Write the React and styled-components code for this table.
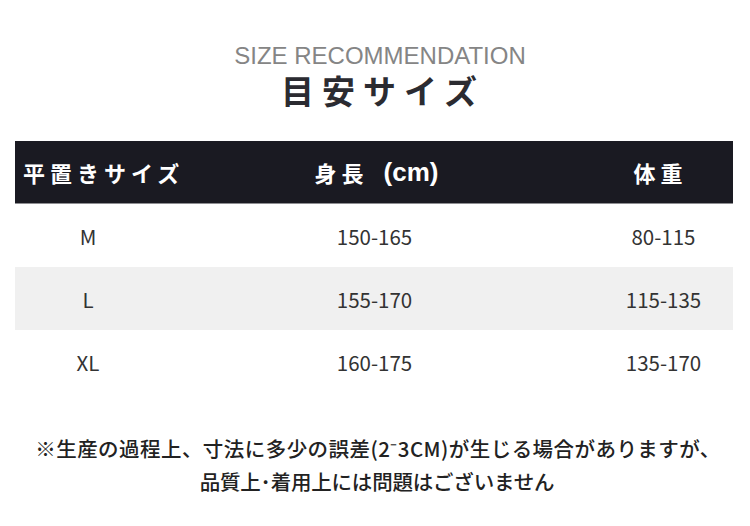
import React from "react";
import styled, { createGlobalStyle } from "styled-components";

const Global = createGlobalStyle`
  html, body { margin: 0; padding: 0; background: #ffffff; }
  body { width: 750px; font-family: "Noto Sans CJK JP", "Noto Sans", sans-serif; }
`;

const Page = styled.div`
  display: flex;
  flex-direction: column;
  align-items: stretch;
  padding-top: 44px;
  width: 750px;
  height: 526px;
  box-sizing: border-box;
  overflow: hidden;
`;

const EnTitle = styled.div`
  font-family: "Liberation Sans", Arial, sans-serif;
  font-size: 24px;
  line-height: 24px;
  color: #858585;
  text-align: center;
  padding-left: 10px;
`;

const JaTitle = styled.div`
  margin-top: 8px;
  font-family: "Noto Sans CJK JP", sans-serif;
  font-weight: 700;
  font-size: 33px;
  line-height: 29px;
  letter-spacing: 8px;
  color: #2b2b31;
  text-align: center;
  padding-left: 16px;
`;

const Table = styled.div`
  margin: 36px 17px 0 15px;
  display: flex;
  flex-direction: column;
`;

const Row = styled.div`
  display: grid;
  grid-template-columns: 146px 427px 1fr;
  align-items: center;
  height: ${(p) => (p.$head ? "62px" : "63px")};
  background: ${(p) => (p.$head ? "#1a1a22" : p.$shade ? "#f0f0f0" : "#ffffff")};
  border-bottom: ${(p) => (p.$head ? "1px solid #8e8e92" : "none")};
`;

const HeadCell = styled.div`
  display: flex;
  align-items: center;
  justify-content: ${(p) => (p.$left ? "flex-start" : "center")};
  font-family: "Noto Sans CJK JP", sans-serif;
  font-weight: 700;
  font-size: 22px;
  letter-spacing: 5px;
  color: #ffffff;
  white-space: nowrap;
  padding-left: ${(p) => (p.$pl ? `${p.$pl}px` : "0")};
`;

const Unit = styled.span`
  font-family: "Liberation Sans", Arial, sans-serif;
  font-weight: 700;
  font-size: 26px;
  letter-spacing: 0;
  margin-left: 15px;
`;

const Cell = styled.div`
  font-family: "Noto Sans CJK JP", sans-serif;
  font-weight: 400;
  font-size: 20.5px;
  color: #333333;
  text-align: center;
  white-space: nowrap;
  padding-left: ${(p) => (p.$pl ? `${p.$pl}px` : "0")};
`;

const Note = styled.div`
  margin-top: 39px;
  display: flex;
  flex-direction: column;
  align-items: center;
`;

const NoteLine = styled.div`
  font-family: "Noto Sans CJK JP", sans-serif;
  font-weight: 500;
  font-size: 20.5px;
  line-height: 33px;
  letter-spacing: ${(p) => p.$ls}px;
  color: #222222;
  white-space: nowrap;
  padding-left: ${(p) => p.$pl}px;
`;

const rows = [
  ["M", "150-165", "80-115"],
  ["L", "155-170", "115-135"],
  ["XL", "160-175", "135-170"],
];

export default function App() {
  return (
    <Page>
      <Global />
      <EnTitle>SIZE RECOMMENDATION</EnTitle>
      <JaTitle>目安サイズ</JaTitle>
      <Table>
        <Row $head>
          <HeadCell $left $pl={8}>平置きサイズ</HeadCell>
          <HeadCell $pl={4}>
            身長<Unit>(cm)</Unit>
          </HeadCell>
          <HeadCell>体重</HeadCell>
        </Row>
        {rows.map((r, i) => (
          <Row key={r[0]} $shade={i === 1}>
            <Cell>{r[0]}</Cell>
            <Cell>{r[1]}</Cell>
            <Cell $pl={6}>{r[2]}</Cell>
          </Row>
        ))}
      </Table>
      <Note>
        <NoteLine $ls={0.45} $pl={6}>
          ※生産の過程上、寸法に多少の誤差(2⁻3CM)が生じる場合がありますが、
        </NoteLine>
        <NoteLine $ls={-0.2} $pl={4}>品質上･着用上には問題はございません</NoteLine>
      </Note>
    </Page>
  );
}
